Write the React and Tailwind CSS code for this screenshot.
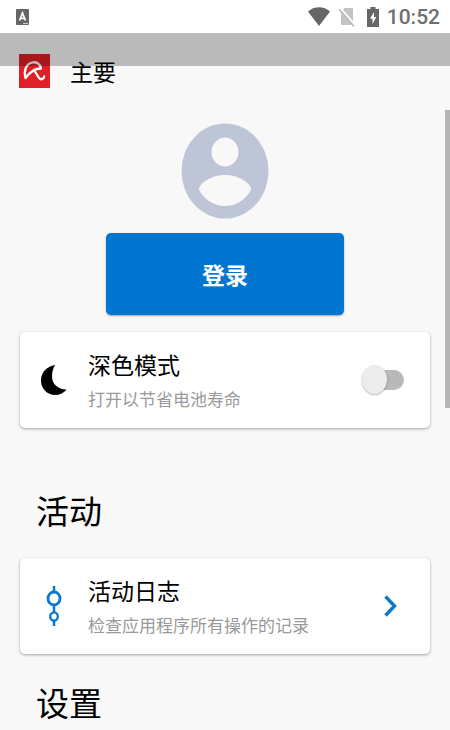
import { useState } from 'react'

function StatusBar() {
  return (
    <div className="flex h-[33px] items-center justify-between bg-white pr-[10px] pl-4 text-[#6e6e6e]">
      <svg width="13" height="16" viewBox="0 0 13 16" aria-hidden="true">
        <rect width="13" height="16" rx="1" fill="#666" />
        <path d="M3.5 11.5 6.5 4l3 7.5M4.6 9.3h3.8" fill="none" stroke="#fff" strokeWidth="1.7" />
        <path d="M7 14.5h5" stroke="#ccc" strokeWidth="1" />
      </svg>
      <div className="flex items-center">
        <svg width="22" height="19" viewBox="0 0 22 19" aria-hidden="true">
          <path d="M0 4.5C6-1.2 16-1.2 22 4.5L11 19Z" fill="#666" />
        </svg>
        <svg className="ml-[9px]" width="16" height="20" viewBox="0 0 16 20" aria-hidden="true">
          <path d="M5.5 1H14v17H2V5.5Z" fill="#c4c4c4" />
          <path d="M1 .5 16 18" stroke="#fff" strokeWidth="1.8" />
          <path d="M0 2 15 19.5" stroke="#bdbdbd" strokeWidth="1.6" />
        </svg>
        <svg className="ml-3" width="12" height="20" viewBox="0 0 12 20" aria-hidden="true">
          <path d="M3.5 0h5v2H12v18H0V2h3.5Z" fill="#666" />
          <path d="M7 5 3 11.7h2.5V17L9.3 10H7Z" fill="#fff" />
        </svg>
        <span className="ml-2 font-[Roboto] text-[21px] leading-6 font-medium">10:52</span>
      </div>
    </div>
  )
}

function Header() {
  return (
    <header className="relative flex h-[76px] items-center gap-5 px-[19px]">
      <svg width="31" height="34" viewBox="0 0 31 34" aria-hidden="true">
        <rect width="31" height="34" fill="#e01f26" />
        <path
          d="M6.5 24C4.5 17 7 10 13 8.5C17.5 7.500 21.500 10 22 14.500C16 14.500 11 18 6.5 24M15 16l5 8c1.500 2 4.700 1.500 5.200-1.500"
          fill="none"
          stroke="#fff"
          strokeWidth="2.3"
          strokeLinecap="round"
          strokeLinejoin="round"
        />
      </svg>
      <h1 className="text-[23px] leading-8">主要</h1>
      {/* Dimmed strip under the status bar */}
      <div className="pointer-events-none absolute inset-x-0 top-0 h-[33px] bg-black/25" />
    </header>
  )
}

function Avatar() {
  return (
    <svg width="88" height="96" viewBox="0 0 88 96" aria-hidden="true">
      <ellipse cx="44" cy="48" rx="43.5" ry="47.5" fill="#bdc5d6" />
      <ellipse cx="44" cy="29" rx="13.5" ry="14.5" fill="#f8f8f8" />
      <path
        d="M18 67C17.5 60 31 52 44 52S70.5 60 70 67C64.5 77 54.5 83 44 83S23.5 77 18 67Z"
        fill="#f8f8f8"
      />
    </svg>
  )
}

function MoonIcon() {
  return (
    <svg width="26" height="30" viewBox="0 0 26 30" aria-hidden="true">
      <path d="M14 0C5.5 1.5 0 7.5 0 15.5 0 23.5 6 30 14 30c5 0 9-2 11.5-5.5C17 24.5 11 19 11 11.5 11 7 12 3.5 14 0Z" />
    </svg>
  )
}

function TimelineIcon() {
  return (
    <svg width="16" height="40" viewBox="0 0 16 40" fill="none" stroke="#0b78cb" aria-hidden="true">
      <path d="M8 0v6M8 19v7M8 35v5" strokeWidth="2.5" />
      <ellipse cx="8" cy="12.5" rx="6" ry="6.5" strokeWidth="2.8" />
      <ellipse cx="8" cy="30.5" rx="3.8" ry="4.2" strokeWidth="2.3" />
    </svg>
  )
}

function CardText({ title, text }) {
  return (
    <span className="flex min-w-0 flex-1 flex-col pt-px">
      <span className="text-[23px] leading-9">{title}</span>
      <span className="text-[17px] leading-[33px] text-[#999]">{text}</span>
    </span>
  )
}

const cardClass =
  'flex h-24 w-full items-center rounded-[5px] bg-white pr-[26px] text-left shadow-[0_1px_3px_rgba(0,0,0,0.35)]'

export default function App() {
  const [darkMode, setDarkMode] = useState(false)

  return (
    <div className="relative h-screen overflow-hidden bg-[#f8f8f8] font-['Noto_Sans_CJK_SC',sans-serif] text-black">
      <StatusBar />
      <Header />

      <main className="px-5 pt-[14px]">
        <div className="flex flex-col items-center gap-[14px]">
          <Avatar />
          <button
            type="button"
            className="h-[82px] w-[238px] rounded-[5px] bg-[#0176d0] text-[23px] font-bold text-white shadow-[0_1px_2px_rgba(0,0,0,0.35)]"
          >
            登录
          </button>
        </div>

        <label className={`${cardClass} mt-[17px]`}>
          <span className="flex w-[68px] justify-center">
            <MoonIcon />
          </span>
          <CardText title="深色模式" text="打开以节省电池寿命" />
          <input
            type="checkbox"
            role="switch"
            checked={darkMode}
            onChange={(e) => setDarkMode(e.target.checked)}
            className="relative h-5 w-9 appearance-none rounded-full bg-[#b9b9b9] before:absolute before:-top-[5px] before:-left-[6px] before:h-[29px] before:w-[25px] before:rounded-[50%] before:bg-[#ececec] before:shadow-[0_1px_2px_rgba(0,0,0,0.3)] checked:before:left-4"
          />
        </label>

        <h2 className="mt-[58px] mb-6 px-4 text-[33px] leading-[48px]">活动</h2>
        <button type="button" className={cardClass}>
          <span className="flex w-[68px] justify-center">
            <TimelineIcon />
          </span>
          <CardText title="活动日志" text="检查应用程序所有操作的记录" />
          <svg className="mr-[7px]" width="13" height="22" viewBox="0 0 13 22" fill="none" aria-hidden="true">
            <path d="M1.5 1.5 10.5 11 1.5 20.5" stroke="#0b78cb" strokeWidth="3.4" />
          </svg>
        </button>

        <h2 className="mt-6 px-4 text-[33px] leading-[48px]">设置</h2>
      </main>

      {/* Scroll thumb */}
      <div className="absolute top-[110px] right-0 h-[298px] w-[5px] bg-[#b5b5b5]" />
    </div>
  )
}
